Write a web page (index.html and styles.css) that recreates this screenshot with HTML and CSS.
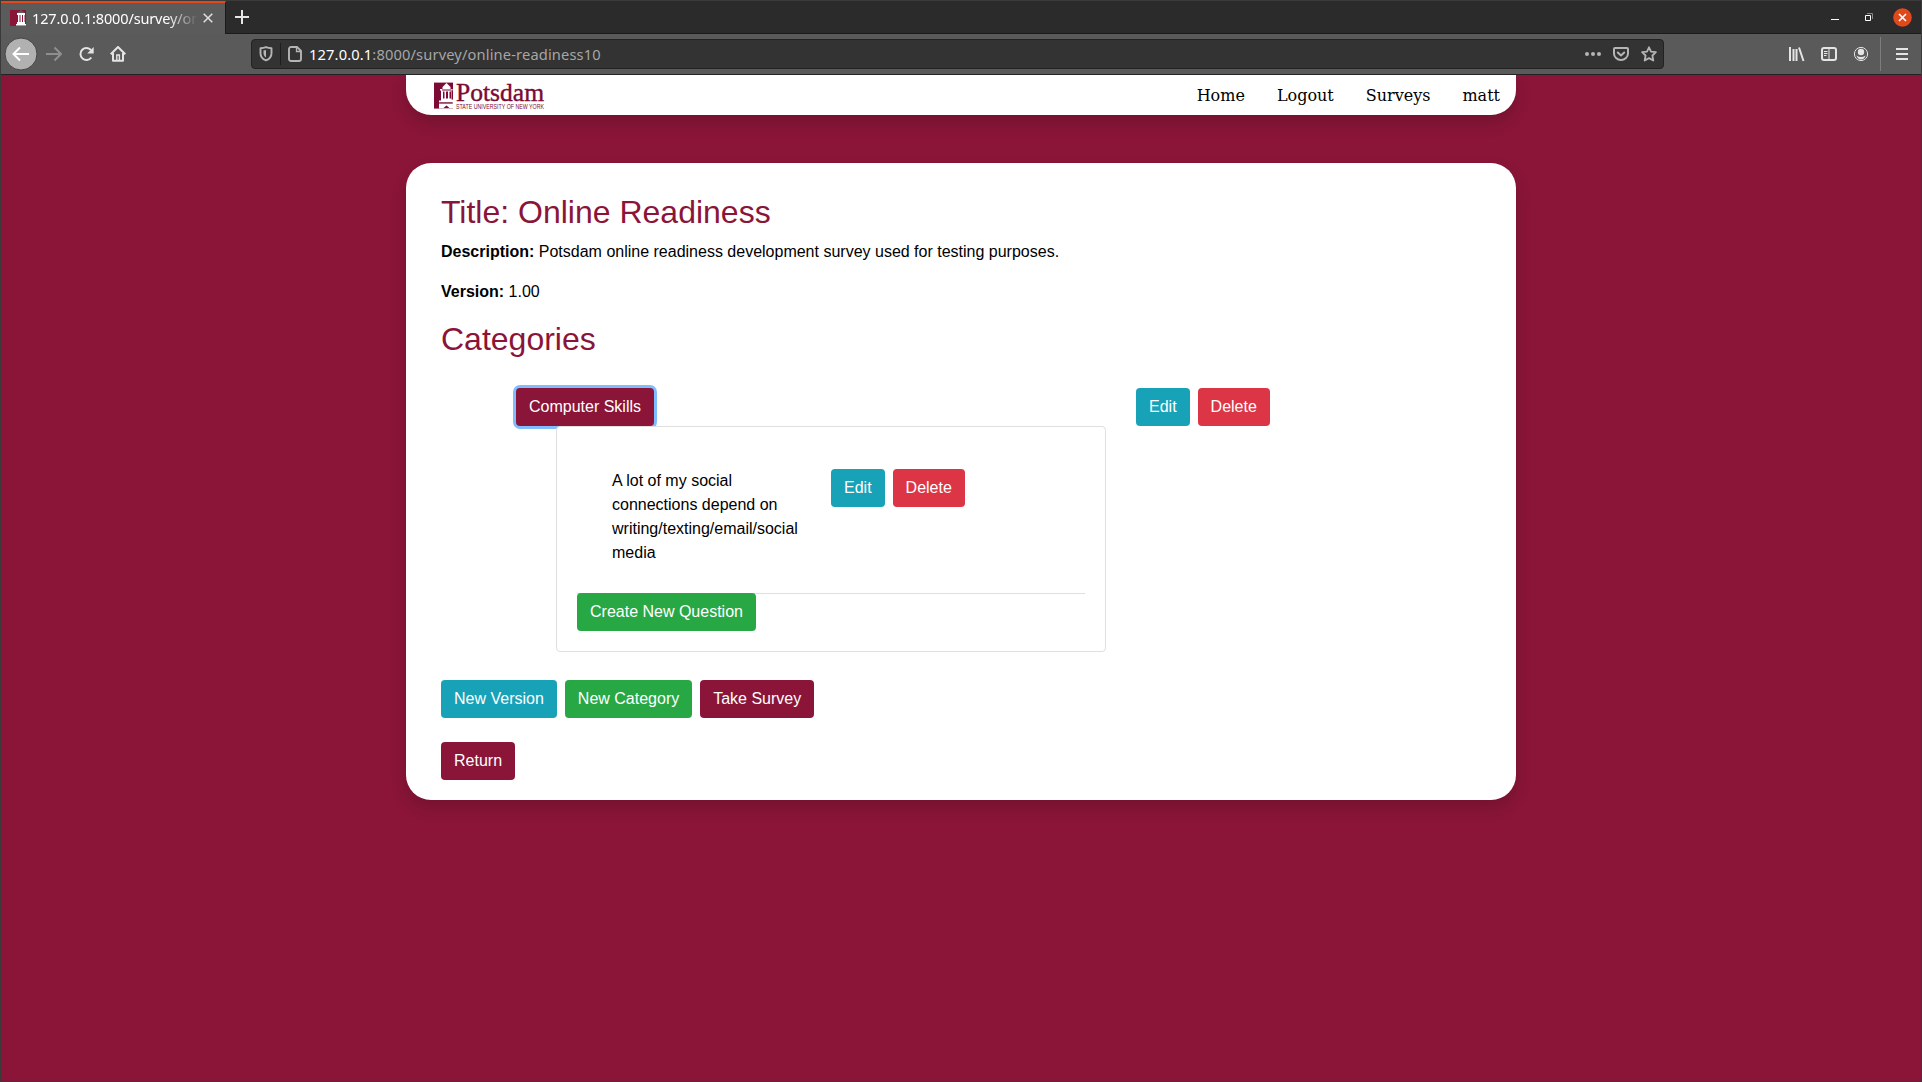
FILE: index.html
```html
<!DOCTYPE html>
<html lang="en">
<head>
<meta charset="utf-8">
<title>Online Readiness</title>
<link rel="stylesheet" href="styles.css">
</head>
<body>
<div class="window">
  <header class="tabbar">
    <div class="tab">
      <svg class="favicon" width="16" height="16" viewBox="0 0 16 16"><path fill="#8a1538" d="M0 0h16v16H0z"/><path fill="#5b5b5b" d="M7 3l4-3 4 3z"/><path fill="#fff" d="M7 3h8v2H7zM8 5h1.500v7H8zM10.500 5h1.500v7h-1.500zM13 5h1.500v7H13zM7 12h8v2h1v1.500H6V14h1z"/></svg>
      <span class="tab-title">127.0.0.1:8000/survey/on</span>
      <svg class="tab-close" width="10" height="10" viewBox="0 0 10 10"><path d="M.7.7l8.600 8.600M9.300.7L.7 9.300" stroke="#ddd" stroke-width="1.600"/></svg>
    </div>
    <svg class="new-tab" width="14" height="14" viewBox="0 0 14 14"><path d="M7 0v14M0 7h14" stroke="#e6e6e6" stroke-width="2"/></svg>
    <div class="window-controls">
      <svg width="8" height="18" viewBox="0 0 8 18"><path d="M0 11.500h8" stroke="#fff"/></svg>
      <svg width="8" height="18" viewBox="0 0 8 18"><path d="M.5 7.500h5v5h-5z" fill="none" stroke="#fff"/><path d="M2 5.500h5.500V11" fill="none" stroke="#888"/></svg>
      <svg width="19" height="19" viewBox="0 0 19 19"><circle cx="9.500" cy="9.500" r="9.300" fill="#e2491a"/><path d="M6 6l7 7M13 6l-7 7" stroke="#fff" stroke-width="1.600"/></svg>
    </div>
  </header>
  <div class="toolbar">
    <div class="nav-buttons">
      <svg width="34" height="34" viewBox="0 0 34 34"><circle cx="17" cy="17" r="16" fill="#b1b1b1" stroke="#454545"/><path d="M25 17H10M16 10.500L9.500 17l6.500 6.500" fill="none" stroke="#fff" stroke-width="2"/></svg>
      <svg width="16" height="16" viewBox="0 0 16 16"><path d="M0 8h14M8.500 1.500L15 8l-6.500 6.500" fill="none" stroke="#8f8f8f" stroke-width="2"/></svg>
      <svg width="16" height="16" viewBox="0 0 16 16"><path d="M13.300 11.500A6 6 0 1 1 13 4" fill="none" stroke="#e4e4e4" stroke-width="2"/><path d="M15.700 1v6.500H9.200z" fill="#e4e4e4"/></svg>
      <svg width="16" height="16" viewBox="0 0 16 16"><path d="M.7 8.300L8 1l7.300 7.300M3 7v7.800h10V7" fill="none" stroke="#e4e4e4" stroke-width="2" stroke-linejoin="round"/><path d="M6.800 14V9h2.600v5" fill="none" stroke="#e4e4e4" stroke-width="1.400"/></svg>
    </div>
    <div class="urlbar">
      <svg width="14" height="16" viewBox="0 0 14 16"><path d="M7 1.200c2 .8 3.800 1 5.500 1v5c0 3.500-2.500 6-5.500 7.200C4 13.200 1.500 10.700 1.500 7.200v-5c1.700 0 3.500-.2 5.500-1z" fill="none" stroke="#b5b5b5" stroke-width="1.900" stroke-linejoin="round"/><path d="M7 4v7.500C5.500 10.500 4.500 9 4.500 7V4.500z" fill="#b5b5b5"/></svg>
      <span class="divider"></span>
      <svg width="14" height="16" viewBox="0 0 14 16"><path d="M3 1h6l4 4v8a2 2 0 0 1-2 2H3a2 2 0 0 1-2-2V3a2 2 0 0 1 2-2z" fill="none" stroke="#b5b5b5" stroke-width="1.900"/><path d="M8.500 1v4.500H13" fill="none" stroke="#b5b5b5" stroke-width="1.300"/></svg>
      <span class="url"><b>127.0.0.1</b>:8000/survey/online-readiness10</span>
      <div class="page-actions">
        <svg width="16" height="16" viewBox="0 0 16 16" fill="#b5b5b5"><circle cx="2" cy="8" r="2"/><circle cx="8" cy="8" r="2"/><circle cx="14" cy="8" r="2"/></svg>
        <svg width="16" height="16" viewBox="0 0 16 16" fill="none" stroke="#b5b5b5" stroke-width="2" stroke-linecap="round" stroke-linejoin="round"><path d="M2 2h12q1 0 1 1v4.500a7 6.500 0 0 1-14 0V3q0-1 1-1z"/><path d="M4.800 6.500L8 9.500l3.200-3"/></svg>
        <svg width="16" height="16" viewBox="0 0 16 16"><path d="M8 1.300l2 4.300 4.900.6-3.500 3.300.9 5L8 12.100l-4.300 2.400.9-5L1.100 6.200 6 5.600z" fill="none" stroke="#b5b5b5" stroke-width="1.800" stroke-linejoin="round"/></svg>
      </div>
    </div>
    <div class="tools">
      <svg width="16" height="16" viewBox="0 0 16 16" stroke="#e4e4e4" stroke-width="2"><path d="M1 1v14M4.500 3v12M7.500 3v12M10 1.500L14.500 15"/></svg>
      <svg width="16" height="16" viewBox="0 0 16 16" fill="none" stroke="#e4e4e4"><rect x="1" y="2" width="14" height="12" rx="2" stroke-width="2"/><path d="M8 2v12M3 5.500h3.500M3 7.500h3.500M3 9.500h2.500"/></svg>
      <svg width="16" height="16" viewBox="0 0 16 16"><circle cx="8" cy="8" r="6.600" fill="none" stroke="#e4e4e4"/><circle cx="8" cy="6" r="3.200" fill="#e4e4e4"/><path d="M3.500 9.500q4.500 3 9 0-1 4-4.500 4t-4.500-4z" fill="#e4e4e4"/></svg>
      <span class="tool-divider"></span>
      <svg width="12" height="16" viewBox="0 0 12 16"><path d="M0 3h12M0 8h12M0 13h12" stroke="#e4e4e4" stroke-width="2"/></svg>
    </div>
  </div>
  <main class="page">
    <nav class="site-nav">
      <svg class="logo" width="112" height="34" viewBox="0 0 112 34" fill="#7b0a35">
        <g transform="translate(0 3.600)">
          <path d="M0 1h19v26H0z"/>
          <path fill="#fff" d="M12.500 1.500l4 4v2h2v1.500h-1v9h1.500V21H5v-2h2V9H6V7.500h2.500V5.500zM5 22h14v5H5z"/>
          <path d="M9 10h1.500v7H9zM12 10h2v7h-2zM15.500 10H17v7h-1.500zM8 7.800h9.500v1H8zM5.500 20.800H18v.8H5.500zM9.500 26.500l3-2.500 3 2.500z"/>
        </g>
        <text class="logo-name" x="22" y="22.500" textLength="88" lengthAdjust="spacingAndGlyphs">Potsdam</text>
        <text class="logo-sub" x="22" y="30.600" textLength="88" lengthAdjust="spacingAndGlyphs">STATE UNIVERSITY OF NEW YORK</text>
      </svg>
      <a>Home</a><a>Logout</a><a>Surveys</a><a>matt</a>
    </nav>
    <section class="card">
      <h1>Title: Online Readiness</h1>
      <p><strong>Description:</strong> Potsdam online readiness development survey used for testing purposes.</p>
      <p><strong>Version:</strong> 1.00</p>
      <h1>Categories</h1>
      <div class="category">
        <div class="category-main">
          <button class="btn maroon focused">Computer Skills</button>
          <div class="panel">
            <div class="question">
              <div class="question-text">A lot of my social connections depend on writing/texting/email/social media</div>
              <div class="btn-row"><button class="btn info">Edit</button><button class="btn danger">Delete</button></div>
            </div>
            <div class="panel-footer"><button class="btn success">Create New Question</button></div>
          </div>
        </div>
        <div class="btn-row"><button class="btn info">Edit</button><button class="btn danger">Delete</button></div>
      </div>
      <div class="btn-row actions"><button class="btn info">New Version</button><button class="btn success">New Category</button><button class="btn maroon">Take Survey</button></div>
      <button class="btn maroon">Return</button>
    </section>
  </main>
</div>
</body>
</html>
```
FILE: styles.css
```css
* { box-sizing: border-box; }
body { margin: 0; font: 16px/1.5 "Liberation Sans", Arial, sans-serif; color: #000; }
svg { display: block; flex: none; }
.window { height: 1082px; border: 1px solid #3a3a3a; display: flex; flex-direction: column; overflow: hidden; }

.tabbar { height: 33px; flex: none; display: flex; background: #2b2b2b; border-bottom: 1px solid #1b1b1b; }
.tab { width: 225px; height: 33px; padding: 0 12px 2px 9px; display: flex; align-items: center; background: #5b5b5b; border-top: 2px solid #e2491a; border-right: 1px solid #1b1b1b; }
.tab-title { width: 166px; margin-left: 6px; overflow: hidden; white-space: nowrap; font: 14.5px/22px "Noto Sans", sans-serif; letter-spacing: -.15px; color: #fff; -webkit-mask-image: linear-gradient(90deg, #000 135px, transparent 166px); mask-image: linear-gradient(90deg, #000 135px, transparent 166px); }
.tab-close { margin-left: 6px; }
.new-tab { margin: 9px 0 0 9px; }
.window-controls { margin-left: auto; padding-right: 9px; display: flex; align-items: center; gap: 25px; }
.window-controls svg:nth-child(2) { margin: 0 -5px 0 1px; }

.toolbar { height: 41px; flex: none; display: flex; align-items: center; background: #5a5a5a; border-bottom: 1px solid #232323; }
.nav-buttons { width: 250px; display: flex; align-items: center; padding-left: 3px; gap: 16px; }
.nav-buttons svg:nth-child(2) { margin-left: -8px; }
.urlbar { width: 1413px; height: 30px; display: flex; align-items: center; padding: 0 6px 0 7px; background: #333; border: 1px solid #222; border-radius: 4px; }
.divider { width: 1px; height: 22px; margin: 0 7px 0 7px; background: #1d1d1d; }
.url { margin-left: 7px; white-space: nowrap; font: 14.67px/20px "Noto Sans", sans-serif; letter-spacing: .14px; color: #a6a6a6; }
.url b { font-weight: 400; color: #fff; }
.page-actions { margin-left: auto; display: flex; gap: 12px; }
.tools { margin-left: auto; padding-right: 13px; display: flex; align-items: center; gap: 16px; }
.tool-divider { width: 1px; height: 34px; margin: 0 -1px 0 -5px; background: #7d7d7d; }

.page { flex: 1; background: #8a1538; display: flex; flex-direction: column; align-items: center; gap: 48px; overflow: hidden; }
.site-nav, .card { width: 1110px; background: #fff; box-shadow: 0 8px 16px rgba(0,0,0,.15); }
.site-nav { height: 40px; padding: 2px 16px 0 28px; display: flex; align-items: center; gap: 32px; border-radius: 0 0 25px 25px; font: 16px/24px "DejaVu Serif", serif; }
.logo { margin: -2px auto 0 0; overflow: visible; }
.logo-name { font: 25.5px "Liberation Serif", serif; stroke: #7b0a35; stroke-width: .4px; }
.logo-sub { font: 6.800px "Liberation Sans", sans-serif; }
.card { height: 637px; padding: 30px 35px 20px; border-radius: 25px; }
h1 { margin: 0 0 9px; font-size: 32px; font-weight: 500; line-height: 1.2; color: #8a1538; }
p { margin: 0 0 16px; }

.btn { display: block; height: 38px; margin: 0; padding: 0 13px; border: 0; border-radius: 4px; font: 16px/38px "Liberation Sans", Arial, sans-serif; color: #fff; white-space: nowrap; }
.maroon { background: #8a1538; }
.info { background: #17a2b8; }
.success { background: #28a745; }
.danger { background: #dc3545; }
.focused { box-shadow: 0 0 0 3px #80bdff; }
.btn-row { display: flex; gap: 8px; align-items: flex-start; }
.category { display: flex; gap: 30px; padding: 20px 0 28px 75px; }
.category-main { width: 590px; }
.panel { position: relative; margin-left: 40px; height: 226px; padding: 42px 20px 20px; background: #fff; border: 1px solid #dfdfdf; border-radius: 4px; }
.question { display: flex; height: 124px; padding-left: 35px; }
.question-text { width: 219px; padding-right: 30px; }
.panel-footer { border-top: 1px solid #dfdfdf; }
.panel-footer .btn { margin-top: -1px; }
.actions { margin-bottom: 24px; }
```
